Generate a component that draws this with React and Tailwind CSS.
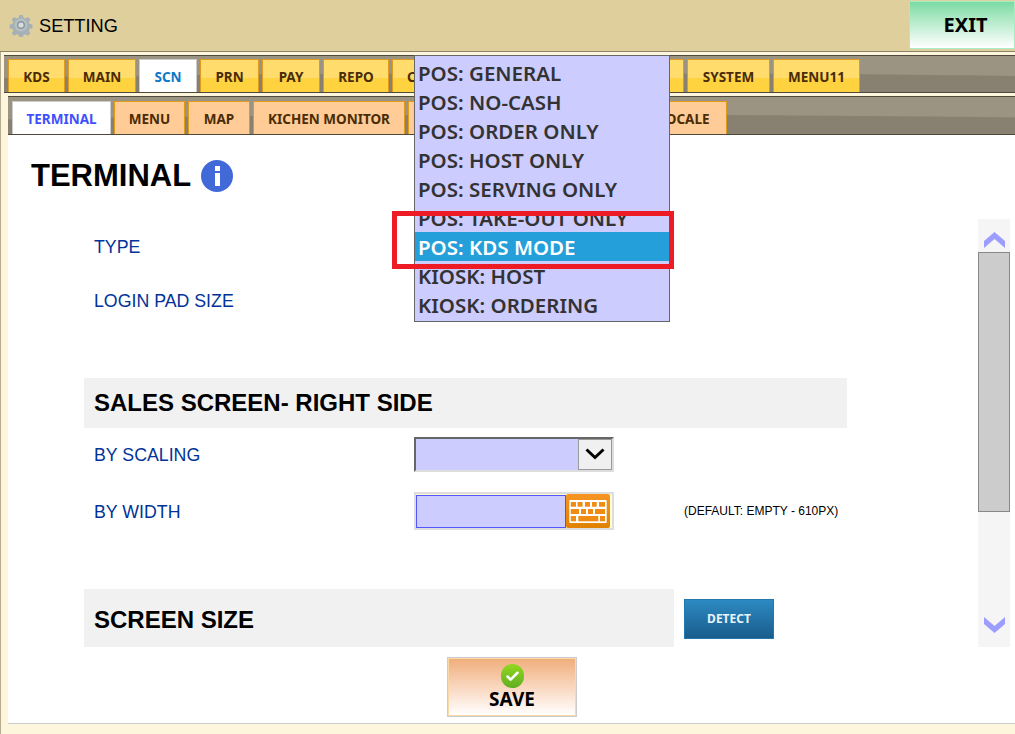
import { Check } from 'lucide-react';

// the tabs behind the open dropdown can't be read in the picture, so they carry no label
const mainTabs = [
  { label: 'KDS', w: 'w-[57px]' },
  { label: 'MAIN', w: 'w-[68px]' },
  { label: 'SCN', w: 'w-[58px]', active: true },
  { label: 'PRN', w: 'w-[59px]' },
  { label: 'PAY', w: 'w-[58px]' },
  { label: 'REPO', w: 'w-[66px]' },
  { label: 'C', w: 'w-[66px]', pad: 'justify-start pl-[14px]' },
  { label: '', w: 'w-[60px]' },
  { label: '', w: 'w-[80px]' },
  { label: '', w: 'w-[77px]' },
  { label: 'SYSTEM', w: 'w-[83px]' },
  { label: 'MENU11', w: 'w-[87px]' },
];

const subTabs = [
  { label: 'TERMINAL', w: 'w-[99px]', active: true },
  { label: 'MENU', w: 'w-[71px]' },
  { label: 'MAP', w: 'w-[62px]' },
  { label: 'KICHEN MONITOR', w: 'w-[152px]' },
  { label: '', w: 'w-[120px]' },
  { label: '', w: 'w-[107px]' },
  { label: 'LOCALE', w: 'w-[86px]' },
];

const options = [
  'POS: GENERAL',
  'POS: NO-CASH',
  'POS: ORDER ONLY',
  'POS: HOST ONLY',
  'POS: SERVING ONLY',
  'POS: TAKE-OUT ONLY',
  'POS: KDS MODE',
  'KIOSK: HOST',
  'KIOSK: ORDERING',
];

function GearIcon() {
  return (
    <svg width="24" height="24" viewBox="0 0 24 24">
      <path
        d="M10 1h4l.6 3 2.2.9 2.6-1.7 2.8 2.8-1.7 2.6.9 2.2 3 .6v4l-3 .6-.9 2.2 1.7 2.6-2.8 2.8-2.6-1.7-2.2.9-.6 3h-4l-.6-3-2.2-.9-2.6 1.7-2.8-2.8 1.7-2.6-.9-2.2-3-.6v-4l3-.6.9-2.2-1.7-2.6 2.8-2.8 2.6 1.700 2.2-.9z"
        fill="#a6b1b6"
        transform="translate(1 1) scale(0.92)"
      />
      <circle cx="12" cy="12" r="6.500" fill="#b6c0c4" />
      <circle cx="12" cy="12" r="4" fill="#8a979c" />
      <circle cx="12" cy="12" r="2.600" fill="#d6dbdd" />
    </svg>
  );
}

function KeyboardIcon() {
  const keys = [
    [1.5, 2, 5.2, 4.7], [8.3, 2, 5, 4.7], [15.7, 2, 5, 4.7], [22.7, 2, 4.7, 4.7], [29.7, 2, 6, 4.7],
    [1.5, 9, 8.2, 5], [11.7, 9, 5, 5], [18.7, 9, 5, 5], [25.7, 9, 10, 5],
    [1.5, 16, 5.200, 5.300], [9, 16, 20, 5.300], [30.7, 16, 5, 5.300],
  ];
  return (
    <svg width="38" height="23" viewBox="0 0 37.400 23" className="block">
      <rect width="37.400" height="23" rx="1" fill="#fff" />
      {keys.map(([x, y, w, h]) => (
        <rect key={`${x}-${y}`} x={x} y={y} width={w} height={h} fill="#f08c12" />
      ))}
    </svg>
  );
}

function BarBackground() {
  return (
    <svg className="absolute inset-0 w-full h-full" viewBox="0 0 1000 38" preserveAspectRatio="none">
      <rect width="1000" height="38" fill="#9c9482" />
      <path d="M0 38V23C300 17 700 17 1000 21V38z" fill="#888070" />
    </svg>
  );
}

function Tab({ label, w, active, sub, pad = 'justify-center' }) {
  const inactive = sub
    ? 'bg-[#ffcb96] text-[#4a2c05] border-[#e09a1c]'
    : 'bg-gradient-to-b from-[#ffdc6c] from-55% to-[#ffd23f] to-55% text-[#4a2c05] border-[#e09a1c]';
  const on = sub ? 'bg-white text-[#3f51ff] border-[#cccccc]' : 'bg-white text-[#0b78c9] border-[#cccccc]';
  return (
    <div
      className={`${w} ${pad} h-[33px] pt-[2px] flex items-center shrink-0 border border-b-0 rounded-t-[1px] font-bold text-[13.5px] whitespace-nowrap overflow-hidden ${active ? on : inactive}`}
    >
      {label}
    </div>
  );
}

function Chevron({ down }) {
  return (
    <svg width="21" height="16" viewBox="0 0 21 16" className="block">
      <path d={down ? 'M0 0l10.500 9L21 0v7L10.500 16 0 7z' : 'M0 16l10.500-9L21 16V9L10.500 0 0 9z'} fill="#9d9dff" />
    </svg>
  );
}

export default function App() {
  return (
    <div className="relative w-[1015px] h-[734px] overflow-hidden flex flex-col bg-[#feedbf] font-['Noto_Sans',sans-serif]">
      {/* header */}
      <div className="h-[52px] shrink-0 flex items-center justify-between bg-[#decf9d] border-b border-[#8c8268]">
        <div className="flex items-center gap-[6px] pl-[9px] font-['Liberation_Sans',sans-serif] text-[18.2px] text-black">
          <GearIcon />
          <span className="pt-[2px]">SETTING</span>
        </div>
        <div className="w-[106px] h-[48px] self-start mt-[1px] pl-[7px] flex items-center justify-center bg-gradient-to-b from-[#78dba4] to-white border border-[#a6ecc4] font-bold text-[20px] text-black">
          EXIT
        </div>
      </div>

      <div className="flex-1 flex flex-col min-h-0 pl-[4px] pt-[3px] border-l border-[#b5ab8e] bg-[#fdf5dc]">
        {/* main tabs */}
        <div className="relative h-[38px] shrink-0 -ml-[1px] flex items-end gap-[3px] pl-[4px] border-t border-b border-[#4f493b]">
          <BarBackground />
          <div className="relative flex gap-[3px] items-end">
            {mainTabs.map((t, i) => (
              <Tab key={i} {...t} />
            ))}
          </div>
        </div>

        <div className="flex-1 flex flex-col min-h-0 pl-[4px] pt-[3px] -ml-[1px]">
          {/* sub tabs */}
          <div className="relative h-[39px] shrink-0 flex items-end pl-[4px] border-t border-b border-[#4f493b]">
            <BarBackground />
            <div className="relative flex gap-[3px] items-end">
              {subTabs.map((t, i) => (
                <Tab key={i} {...t} sub />
              ))}
            </div>
          </div>

          {/* page */}
          <div className="h-[589px] shrink-0 bg-white border-b border-[#cccccc] flex font-['Liberation_Sans',sans-serif]">
            <div className="flex-1 min-w-0 flex flex-col">
              <div className="flex items-center gap-[10px] pl-[23px] pt-[16px] h-[65px]">
                <h1 className="font-bold text-[31px] leading-none text-black">TERMINAL</h1>
                <div className="w-[32px] h-[32px] rounded-full bg-[#4169d8] flex flex-col items-center justify-center gap-[2px]">
                  <div className="w-[5px] h-[5px] bg-white" />
                  <div className="w-[5px] h-[13px] bg-white" />
                </div>
              </div>

              <div className="pl-[76px] flex flex-col">
                <div className="h-[24px] mt-[35px] pl-[10px] flex items-center text-[17.75px] text-[#003399]">TYPE</div>
                <div className="h-[24px] mt-[30px] pl-[10px] flex items-center text-[17.75px] text-[#003399]">LOGIN PAD SIZE</div>

                <div className="w-[763px] h-[50px] mt-[65px] pl-[10px] flex items-center bg-[#f1f1f1] font-bold text-[24px] text-black">
                  SALES SCREEN- RIGHT SIDE
                </div>

                <div className="flex items-center h-[36px] mt-[8px]">
                  <div className="w-[330px] pl-[10px] pt-[2px] text-[17.75px] text-[#003399]">BY SCALING</div>
                  <div className="w-[200px] h-[35px] flex bg-[#ccccff] border-t-2 border-l-2 border-[#666666] border-b-2 border-b-[#dddddd] border-r-2 border-r-[#dddddd]">
                    <div className="flex-1" />
                    <div className="w-[34px] flex items-center justify-center bg-[#f0f0f0] border border-[#999999]">
                      <svg width="20" height="12" viewBox="0 0 20 12">
                        <path d="M1.5 1.5L10 9.5l8.500-8" fill="none" stroke="#000" strokeWidth="3" />
                      </svg>
                    </div>
                  </div>
                </div>

                <div className="flex items-center h-[38px] mt-[20px]">
                  <div className="w-[330px] pl-[10px] pt-[2px] text-[17.75px] text-[#003399]">BY WIDTH</div>
                  <div className="w-[200px] h-[38px] flex border-2 border-[#dddddd] bg-[#ffffd0]">
                    <div className="w-[150px] h-[33px] mt-[1px] bg-[#ccccff] border border-[#5555ff]" />
                    <div className="w-[44px] h-[34px] flex items-center justify-center rounded-[2px] bg-gradient-to-b from-[#f69522] to-[#e08300]">
                      <KeyboardIcon />
                    </div>
                  </div>
                  <div className="ml-[70px] text-[12px] text-black whitespace-nowrap">(DEFAULT: EMPTY - 610PX)</div>
                </div>

                <div className="flex items-start mt-[59px]">
                  <div className="w-[590px] h-[58px] pl-[10px] pt-[3px] flex items-center bg-[#f1f1f1] font-bold text-[24px] text-black">
                    SCREEN SIZE
                  </div>
                  <div className="ml-[10px] mt-[10px] w-[90px] h-[40px] flex items-center justify-center bg-gradient-to-b from-[#2d8ac2] to-[#1a5d8c] border border-[#2279ad] font-['Noto_Sans',sans-serif] font-bold text-[12px] text-[#e8f4fc]">
                    DETECT
                  </div>
                </div>

                <div className="ml-[363px] mt-[10px] w-[130px] h-[60px] flex flex-col items-center bg-gradient-to-b from-[#f0ae7c] to-white border-2 border-[#fbd9a6] outline outline-1 outline-[#cccccc] -outline-offset-1">
                  <div className="mt-[5px] w-[23px] h-[24px] rounded-full bg-gradient-to-b from-[#93d71d] to-[#5fae23] flex items-center justify-center">
                    <Check size={15} strokeWidth={4} color="#fff" />
                  </div>
                  <span className="font-['Noto_Sans',sans-serif] font-bold text-[19px] leading-[22px] text-black">SAVE</span>
                </div>
              </div>
            </div>

            {/* scrollbar */}
            <div className="w-[37px] shrink-0 pt-[84px] pr-[5px]">
              <div className="h-[428px] bg-[#f5f5f5] flex flex-col">
                <div className="h-[33px] flex items-end justify-center pb-[4px]">
                  <Chevron />
                </div>
                <div className="h-[260px] bg-[#cccccc] border border-[#888888]" />
                <div className="flex-1 flex items-end justify-center pb-[14px]">
                  <Chevron down />
                </div>
              </div>
            </div>
          </div>
        </div>
      </div>

      {/* open dropdown */}
      <div className="absolute left-[414px] top-[55px] w-[256px] h-[267px] pt-[2px] bg-[#ccccff] border border-[#666666]">
        {options.map((o) => (
          <div
            key={o}
            className={`h-[29px] pl-[3px] pt-[1px] flex items-center font-semibold text-[20.5px] whitespace-nowrap ${o === 'POS: KDS MODE' ? 'bg-[#259fd9] text-white' : 'text-[#333333]'}`}
          >
            {o}
          </div>
        ))}
      </div>

      {/* annotation */}
      <div className="absolute left-[392px] top-[211px] w-[282px] h-[58px] border-[5px] border-[#ed1c24]" />
    </div>
  );
}
